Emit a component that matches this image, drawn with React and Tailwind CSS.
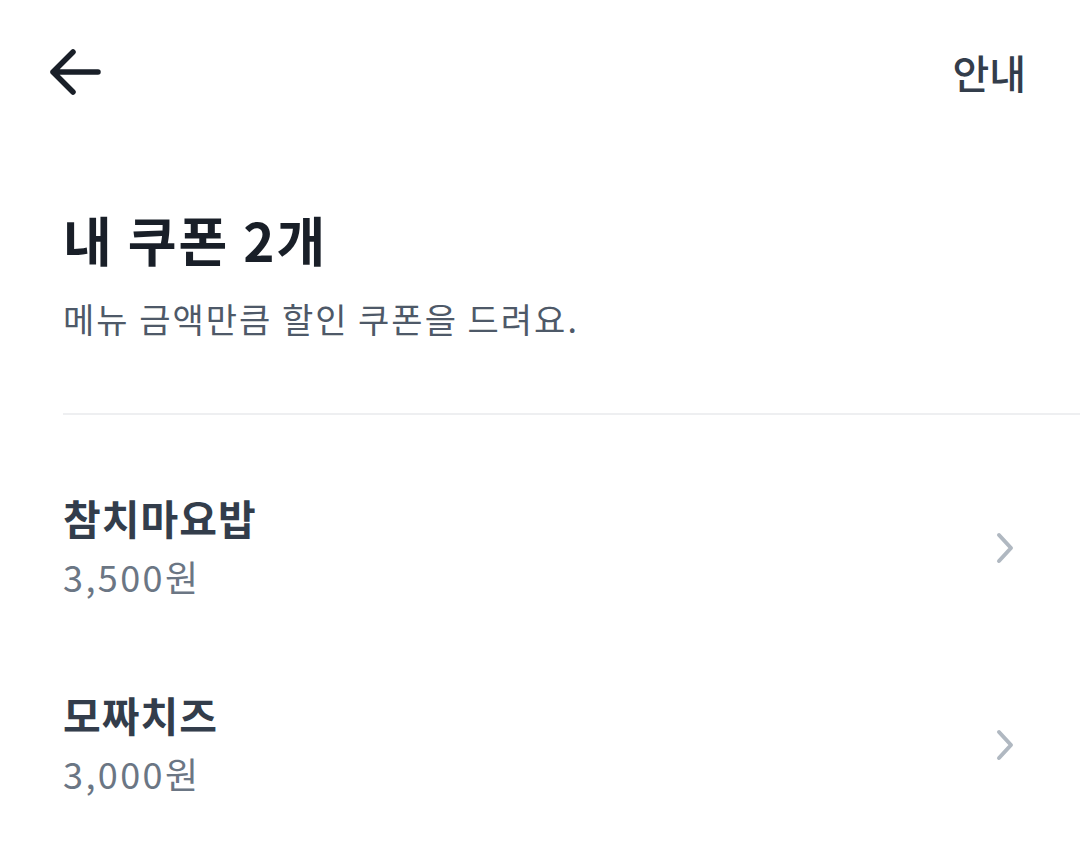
const coupons = [
  { name: "참치마요밥", price: "3,500원" },
  { name: "모짜치즈", price: "3,000원" },
];

function ChevronRight() {
  return (
    <svg width="24" height="36" viewBox="0 0 24 36" fill="none" className="shrink-0 mt-[6px]">
      <path d="M5 4 L17 17 L5 30" stroke="#b0b8c1" strokeWidth="4" strokeLinecap="round" strokeLinejoin="round" />
    </svg>
  );
}

export default function App() {
  return (
    <div
      className="min-h-[860px] w-[1080px] bg-white"
      style={{ fontFamily: '"Noto Sans CJK KR", "Noto Sans", sans-serif' }}
    >
      <header className="flex h-[144px] items-center justify-between pl-[48px] pr-[54px]">
        <svg width="54" height="48" viewBox="0 0 54 48" fill="none">
          <path d="M50 24 H5 M25 4 L5 24 L25 44" stroke="#191f28" strokeWidth="5.5" strokeLinecap="round" strokeLinejoin="round" />
        </svg>
        <span className="text-[40px] font-medium leading-none text-[#333d4b]">안내</span>
      </header>

      <section className="pl-[63px]">
        <h1 className="mt-[61px] text-[53px] font-bold leading-[68px] tracking-[2px] text-[#191f28]">내 쿠폰 2개</h1>
        <p className="mt-[22px] text-[34px] leading-[48px] tracking-[2px] text-[#4e5968]">메뉴 금액만큼 할인 쿠폰을 드려요.</p>
        <div className="mt-[70px] h-[2px] bg-[#eeeff1]" />
      </section>

      <ul className="flex flex-col gap-[87px] pl-[63px] pr-[62px] pt-[76px]">
        {coupons.map((c) => (
          <li key={c.name} className="flex items-center justify-between">
            <div className="flex flex-col gap-[8px]">
              <span className="text-[41px] font-bold leading-[52px] tracking-[1px] text-[#333d4b]">{c.name}</span>
              <span className="text-[36px] leading-[50px] tracking-[2.4px] text-[#6b7684]">{c.price}</span>
            </div>
            <ChevronRight />
          </li>
        ))}
      </ul>
    </div>
  );
}
